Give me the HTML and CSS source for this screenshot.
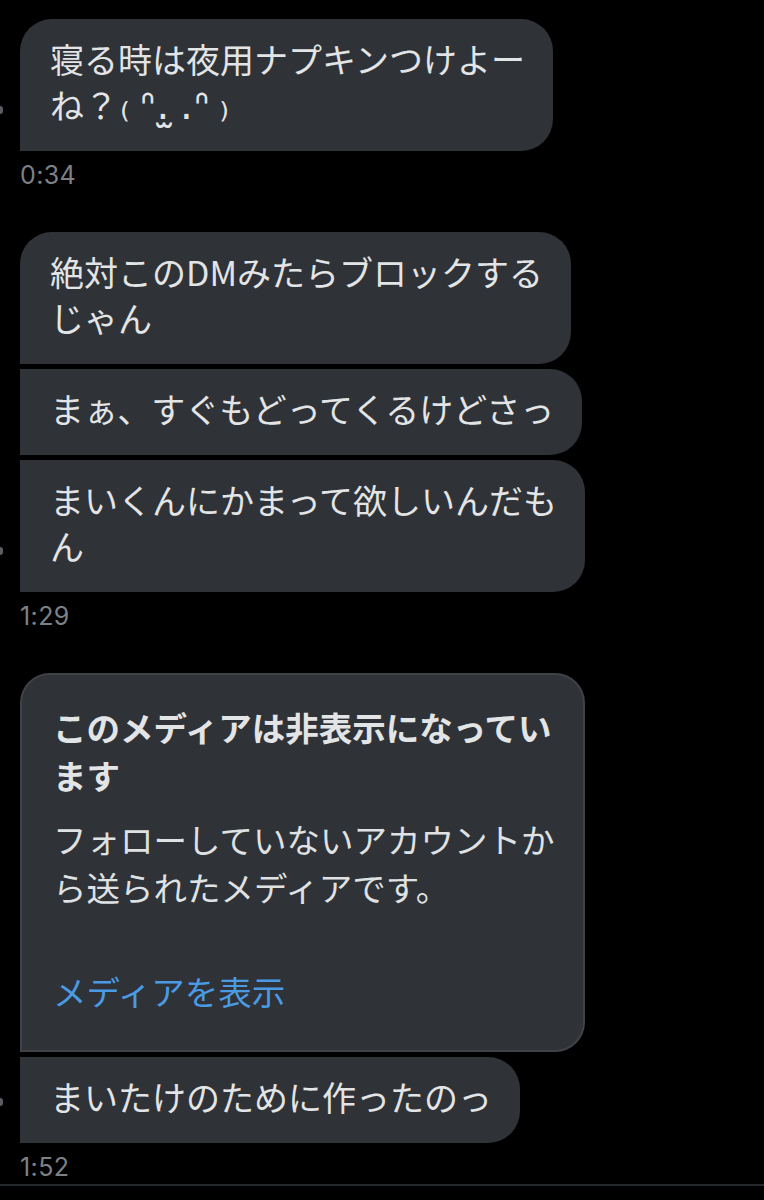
FILE: index.html
```html
<!DOCTYPE html>
<html lang="ja">
<head>
<meta charset="utf-8">
<title>DM</title>
<link rel="stylesheet" href="styles.css">
</head>
<body>
<main class="chat">
  <section class="group">
    <div class="bubbles">
      <span class="avatar"></span>
      <div class="bubble first">寝る時は夜用ナプキンつけよー<br>ね？<span class="kao">₍&#8201;ᐢ.&#8202;̫&#8202;.ᐢ&#8201;₎</span></div>
    </div>
    <div class="time">0:34</div>
  </section>

  <section class="group">
    <div class="bubbles">
      <span class="avatar"></span>
      <div class="bubble first">絶対このDMみたらブロックする<br>じゃん</div>
      <div class="bubble">まぁ、すぐもどってくるけどさっ</div>
      <div class="bubble">まいくんにかまって欲しいんだも<br>ん</div>
    </div>
    <div class="time">1:29</div>
  </section>

  <section class="group">
    <div class="bubbles">
      <span class="avatar"></span>
      <div class="media-card">
        <p class="media-title">このメディアは非表示になってい<br>ます</p>
        <p class="media-text">フォローしていないアカウントか<br>ら送られたメディアです。</p>
        <p class="media-link">メディアを表示</p>
      </div>
      <div class="bubble">まいたけのために作ったのっ</div>
    </div>
    <div class="time">1:52</div>
  </section>
</main>
<div class="divider"></div>
</body>
</html>
```

FILE: styles.css
```css
html, body {
  margin: 0;
  padding: 0;
  background: #000;
}

body {
  font-family: "Noto Sans CJK JP", "DejaVu Sans", sans-serif;
  color: #e2e4e6;
  overflow: hidden;
}

.chat {
  padding: 19px 20px 0;
}

.group {
  display: flex;
  flex-direction: column;
  align-items: flex-start;
  margin-bottom: 42px;
}

.group:last-child {
  margin-bottom: 0;
}

.bubbles {
  position: relative;
  display: flex;
  flex-direction: column;
  align-items: flex-start;
  gap: 5px;
}

.avatar {
  position: absolute;
  left: -20px;
  bottom: 37px;
  width: 3px;
  height: 8px;
  border-radius: 0 4px 4px 0;
  background: #5a5e63;
}

.bubble {
  background: #2f3236;
  font-size: 34px;
  line-height: 46px;
  padding: 17px 28px 23px 30px;
  border-radius: 0;
  border-top-right-radius: 32px;
  border-bottom-right-radius: 32px;
  white-space: nowrap;
}

.bubble.first {
  border-top-left-radius: 32px;
}

.kao {
  font-family: "DejaVu Sans", sans-serif;
  font-size: 40px;
  line-height: 0;
  margin-left: 2px;
  letter-spacing: 1px;
}

.time {
  font-family: Inter, "Liberation Sans", sans-serif;
  font-size: 25px;
  line-height: 30px;
  color: #7d8186;
  margin-top: 9px;
  letter-spacing: 0.4px;
}

.media-card {
  background: #2f3236;
  border: 2px solid #3f4347;
  border-radius: 30px 30px 30px 0;
  padding: 28px 28px 35px 31px;
  white-space: nowrap;
}

.media-card p {
  margin: 0;
  font-size: 33.5px;
  line-height: 48px;
}

.media-title {
  font-weight: 700;
  color: #e2e4e6;
}

.media-text {
  margin-top: 16px !important;
  color: #dfe1e3;
}

.media-link {
  margin-top: 56px !important;
  color: #4a9be4;
}

.divider {
  margin-top: 2px;
  height: 2px;
  background: #25282b;
}
```
